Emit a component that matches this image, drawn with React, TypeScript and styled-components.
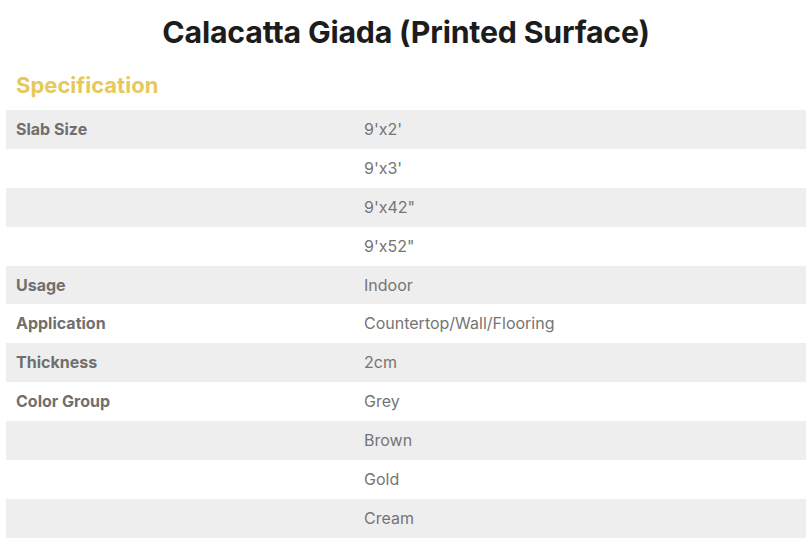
import React from "react"
import styled, { createGlobalStyle } from "styled-components"

const GlobalStyle = createGlobalStyle`
	body {
		margin: 0;
		background: #ffffff;
		font-family: "Inter", "Liberation Sans", sans-serif;
	}
`

const Page = styled.div`
	width: 812px;
	padding: 0 6px;
	box-sizing: border-box;
`

const Title = styled.h1`
	margin: 0;
	padding-top: 14px;
	height: 56px;
	box-sizing: border-box;
	text-align: center;
	font-size: 30.3px;
	font-weight: 700;
	color: #1c1c1c;
	letter-spacing: -0.2px;
`

const SectionTitle = styled.h2`
	margin: 0;
	padding: 16px 10px 0;
	height: 54px;
	box-sizing: border-box;
	font-size: 22px;
	font-weight: 700;
	color: #e6c95c;
`

const SpecTable = styled.div`
	display: grid;
	grid-template-columns: 348px 1fr;
`

const Row = styled.div<{ $shaded: boolean }>`
	display: contents;
	& > div {
		background: ${(p) => (p.$shaded ? "#eeeeee" : "#ffffff")};
	}
`

const Cell = styled.div<{ $label?: boolean }>`
	height: 38.9px;
	display: flex;
	align-items: center;
	padding: 0 10px 1px;
	box-sizing: border-box;
	font-size: 16px;
	font-weight: ${(p) => (p.$label ? 700 : 400)};
	color: ${(p) => (p.$label ? "#6f6f6f" : "#757575")};
`

const rows: [string, string][] = [
	["Slab Size", "9'x2'"],
	["", "9'x3'"],
	["", "9'x42\""],
	["", "9'x52\""],
	["Usage", "Indoor"],
	["Application", "Countertop/Wall/Flooring"],
	["Thickness", "2cm"],
	["Color Group", "Grey"],
	["", "Brown"],
	["", "Gold"],
	["", "Cream"],
]

export default function App() {
	return (
		<>
			<GlobalStyle />
			<Page>
				<Title>Calacatta Giada (Printed Surface)</Title>
				<SectionTitle>Specification</SectionTitle>
				<SpecTable>
					{rows.map(([label, value], i) => (
						<Row key={i} $shaded={i % 2 === 0}>
							<Cell $label>{label}</Cell>
							<Cell>{value}</Cell>
						</Row>
					))}
				</SpecTable>
			</Page>
		</>
	)
}
